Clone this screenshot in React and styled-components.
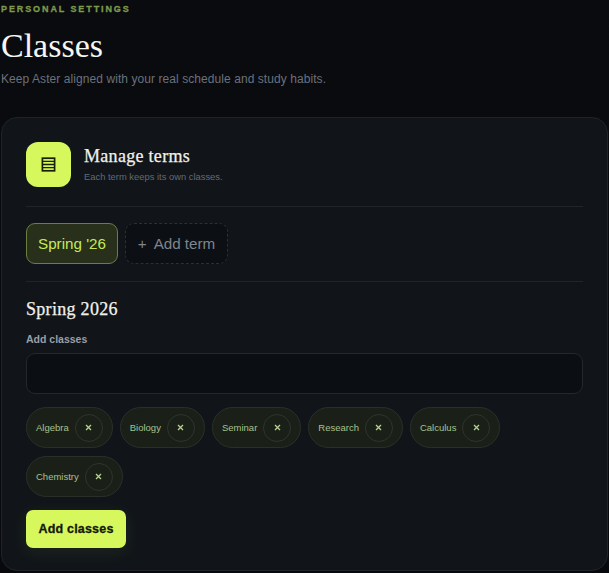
import React from "react";
import styled, { createGlobalStyle } from "styled-components";

const GlobalStyle = createGlobalStyle`
  html, body {
    margin: 0;
    height: 100%;
    background: #07090d;
    overflow: hidden;
  }
  * {
    box-sizing: border-box;
  }
`;

const Page = styled.div`
  width: 609px;
  height: 573px;
  padding: 3px 1px 0 1px;
  font-family: "Liberation Sans", Arial, sans-serif;
  background: linear-gradient(180deg, #090b0f 0%, #07090d 100%);
`;

const Eyebrow = styled.div`
  font-size: 9px;
  line-height: 12px;
  font-weight: 700;
  letter-spacing: 1.9px;
  color: #7d9a4b;
  text-transform: uppercase;
  -webkit-text-stroke: 0.3px #7d9a4b;
`;

const Title = styled.h1`
  margin: 11px 0 0;
  font-family: "Liberation Serif", Georgia, serif;
  font-size: 34px;
  line-height: 40px;
  font-weight: 400;
  color: #f6f6f2;
`;

const Subtitle = styled.p`
  margin: 5px 0 0;
  font-size: 12px;
  line-height: 16px;
  letter-spacing: 0.07px;
  color: #6a717c;
`;

const Card = styled.section`
  margin-top: 30px;
  width: 607px;
  height: 454px;
  padding: 24px;
  background: #11151a;
  border: 1px solid #1f242a;
  border-radius: 16px;
`;

const CardHeader = styled.header`
  display: flex;
  align-items: center;
  gap: 13px;
  padding-bottom: 19px;
  border-bottom: 1px solid #20252b;
`;

const IconBox = styled.div`
  width: 45px;
  height: 45px;
  display: flex;
  align-items: center;
  justify-content: center;
  background: #d7f85c;
  border-radius: 12px;
  color: #1a2008;
`;

const HeaderText = styled.div`
  padding-bottom: 2px;
`;

const CardTitle = styled.h2`
  margin: 0;
  font-family: "Liberation Serif", Georgia, serif;
  font-size: 18px;
  line-height: 22px;
  font-weight: 400;
  letter-spacing: 0.3px;
  color: #f1f1ec;
  -webkit-text-stroke: 0.25px #f1f1ec;
`;

const CardHint = styled.p`
  margin: 4px 0 0;
  font-size: 9.4px;
  line-height: 12px;
  color: #626a75;
`;

const TermRow = styled.div`
  display: flex;
  gap: 7px;
  padding: 16px 0 17px;
  border-bottom: 1px solid #20252b;
`;

const TermTab = styled.button`
  height: 41px;
  width: ${(p) => (p.$active ? "92px" : "103px")};
  padding: 0;
  font-family: inherit;
  font-size: 15.2px;
  color: ${(p) => (p.$active ? "#c4ea58" : "#7f858d")};
  background: ${(p) => (p.$active ? "#282f1a" : "#0c0f14")};
  border: 1px ${(p) => (p.$active ? "solid #6b7f42" : "dashed #2b3038")};
  border-radius: 9px;
`;

const Plus = styled.span`
  margin-right: 7px;
`;

const SectionTitle = styled.h3`
  margin: 16px 0 0;
  font-family: "Liberation Serif", Georgia, serif;
  font-size: 18px;
  line-height: 22px;
  font-weight: 400;
  letter-spacing: 0.3px;
  color: #f1f1ec;
  -webkit-text-stroke: 0.25px #f1f1ec;
`;

const FieldLabel = styled.label`
  display: block;
  margin-top: 12px;
  font-size: 10.5px;
  line-height: 14px;
  font-weight: 700;
  color: #9a9ea6;
`;

const ClassInput = styled.input`
  display: block;
  width: 557px;
  height: 41px;
  margin-top: 7px;
  background: #0b0e13;
  border: 1px solid #23282e;
  border-radius: 9px;
  outline: none;
`;

const ChipList = styled.div`
  display: flex;
  flex-wrap: wrap;
  gap: 8px 7px;
  margin-top: 13px;
`;

const Chip = styled.div`
  display: flex;
  align-items: center;
  gap: 6px;
  height: 41px;
  padding: 0 9px;
  font-size: 9.5px;
  color: #a9c08d;
  background: #1a2018;
  border: 1px solid #2a3029;
  border-radius: 21px;
`;

const ChipRemove = styled.button`
  width: 28px;
  height: 28px;
  padding: 0;
  display: flex;
  align-items: center;
  justify-content: center;
  color: #b9d095;
  background: transparent;
  border: 1px solid #2e352d;
  border-radius: 50%;
`;

const SubmitButton = styled.button`
  display: block;
  width: 100px;
  height: 38px;
  margin-top: 13px;
  padding: 0;
  font-family: inherit;
  font-size: 12.5px;
  font-weight: 700;
  letter-spacing: 0.2px;
  color: #141809;
  background: #d7f85c;
  border: none;
  border-radius: 7px;
  box-shadow: 0 4px 18px rgba(217, 251, 91, 0.07);
  -webkit-text-stroke: 0.3px #141809;
`;

const classes = ["Algebra", "Biology", "Seminar", "Research", "Calculus", "Chemistry"];

function TermsIcon() {
  return (
    <svg width="15" height="15" viewBox="0 0 15 15" fill="none" stroke="currentColor" strokeWidth="1.7">
      <rect x="1.4" y="1.2" width="12.2" height="12.6" />
      <path d="M1.4 4.4h12.2M1.4 7.5h12.2M1.4 10.6h12.2" strokeWidth="1.3" />
    </svg>
  );
}

function CloseIcon() {
  return (
    <svg width="7" height="7" viewBox="0 0 7 7" fill="none" stroke="currentColor" strokeWidth="1.3">
      <path d="M1 1l5 5M6 1l-5 5" />
    </svg>
  );
}

function App() {
  return (
    <Page>
      <GlobalStyle />
      <Eyebrow>Personal settings</Eyebrow>
      <Title>Classes</Title>
      <Subtitle>Keep Aster aligned with your real schedule and study habits.</Subtitle>
      <Card>
        <CardHeader>
          <IconBox>
            <TermsIcon />
          </IconBox>
          <HeaderText>
            <CardTitle>Manage terms</CardTitle>
            <CardHint>Each term keeps its own classes.</CardHint>
          </HeaderText>
        </CardHeader>
        <TermRow>
          <TermTab $active>Spring '26</TermTab>
          <TermTab>
            <Plus>+</Plus>Add term
          </TermTab>
        </TermRow>
        <SectionTitle>Spring 2026</SectionTitle>
        <FieldLabel htmlFor="add-classes">Add classes</FieldLabel>
        <ClassInput id="add-classes" />
        <ChipList>
          {classes.map((name) => (
            <Chip key={name}>
              {name}
              <ChipRemove aria-label={`Remove ${name}`}>
                <CloseIcon />
              </ChipRemove>
            </Chip>
          ))}
        </ChipList>
        <SubmitButton>Add classes</SubmitButton>
      </Card>
    </Page>
  );
}

export default App;
